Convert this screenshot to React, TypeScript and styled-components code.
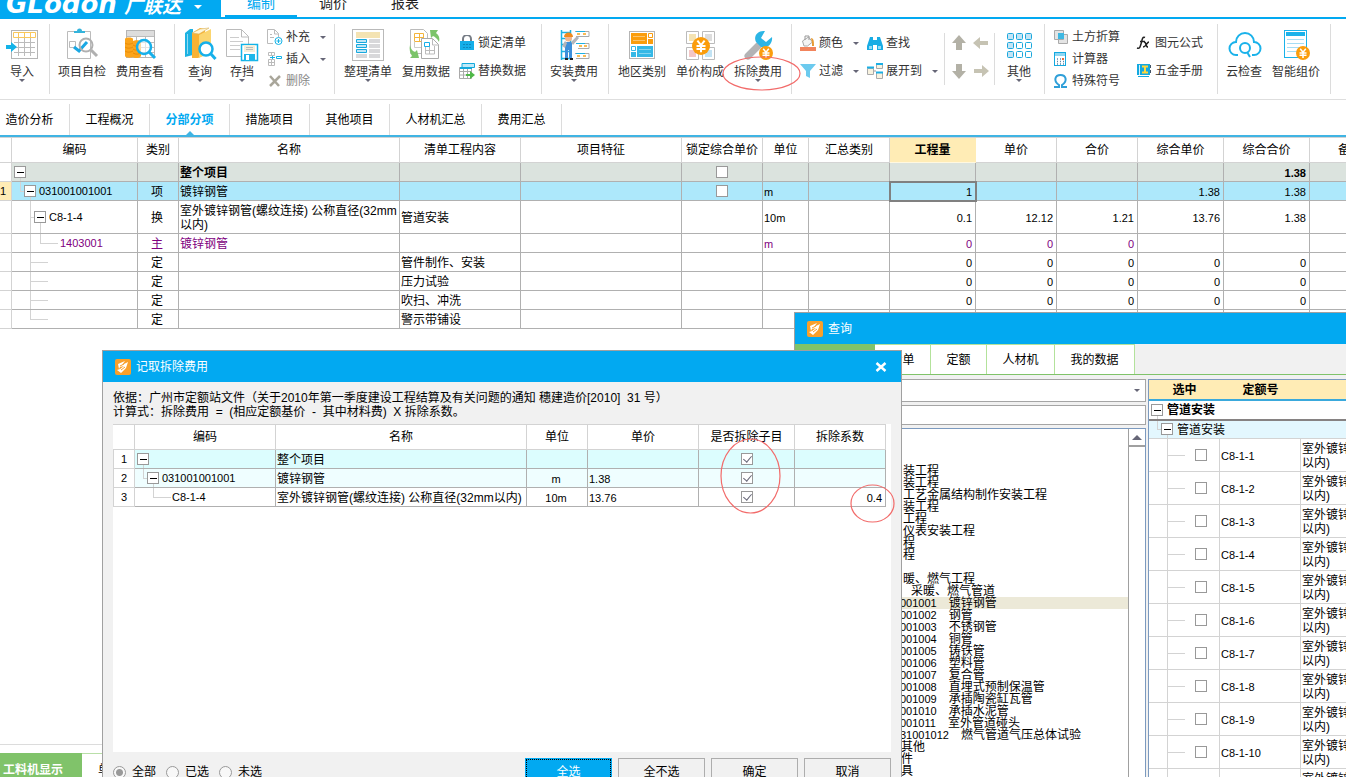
import React from "react";
import styled, { createGlobalStyle, css } from "styled-components";

const blue = "#02a9f1";
const green = "#80c36a";
const grid = "#b0b0b0";
const lightGrid = "#d3d3d3";
const sand = "#ffecb5";

const Global = createGlobalStyle`
  * { box-sizing: border-box; }
  html, body { margin: 0; padding: 0; height: 100%; overflow: hidden; background: #fff; }
  body, button, input, select, table {
    font-family: "Liberation Sans", "Noto Sans CJK SC", sans-serif;
    font-size: 12px;
    line-height: 14px;
    color: #000;
  }
  button { border: 0; padding: 0; background: none; white-space: nowrap; }
  svg { display: block; flex: none; }
`;

const Page = styled.div`
  position: relative;
  display: flex;
  flex-direction: column;
  height: 100vh;
  min-height: 500px;
  overflow: hidden;
`;

/* ---------- header ---------- */

const Header = styled.header`
  display: flex;
  flex: none;
  align-items: flex-end;
  height: 19px;
  overflow: hidden;
  border-bottom: 2px solid ${blue};
`;

const Brand = styled.div`
  display: flex;
  align-items: flex-end;
  width: 221px;
  margin-right: 4px;
  padding-left: 6px;
  background: ${blue};
  color: #fff;
  white-space: nowrap;
`;

const BrandLatin = styled.span`
  width: 118px;
  font: italic bold 26px/26px "DejaVu Sans", sans-serif;
`;

const BrandHan = styled.span`
  font-size: 19px;
  font-weight: bold;
  font-style: italic;
  line-height: 20px;
`;

const MenuTab = styled.button<{ $active?: boolean }>`
  width: 72px;
  height: 27px;
  border-bottom: 2px solid ${(p) => (p.$active ? blue : "transparent")};
  color: ${(p) => (p.$active ? blue : "#222")};
  font-size: 14px;
`;

const Caret = styled.i<{ $light?: boolean }>`
  flex: none;
  width: 0;
  height: 0;
  border: 3px solid transparent;
  border-bottom: 0;
  border-top-color: ${(p) => (p.$light ? "#fff" : "#667")};
`;

const BrandCaret = styled(Caret)`
  margin: 0 0 8px 13px;
  border-width: 4px;
  border-bottom: 0;
`;

/* ---------- ribbon ---------- */

const Ribbon = styled.nav`
  display: flex;
  flex: none;
  height: 81px;
  padding-top: 5px;
  border-bottom: 1px solid #dedede;
`;

const Group = styled.div<{ $w: number; $pad?: number; $short?: boolean }>`
  position: relative;
  display: flex;
  flex: none;
  width: ${(p) => p.$w}px;
  height: 70px;
  padding-left: ${(p) => p.$pad || 0}px;
  &::after {
    content: "";
    position: absolute;
    right: 0;
    top: ${(p) => (p.$short ? 9 : 0)}px;
    bottom: ${(p) => (p.$short ? 9 : 0)}px;
    border-right: 1px solid #dcdcdc;
  }
`;

const BigButton = styled.button<{ $w: number }>`
  position: relative;
  display: flex;
  flex: none;
  flex-direction: column;
  align-items: center;
  width: ${(p) => p.$w}px;
  height: 60px;
  padding-top: 3px;
  color: #333;
  line-height: 18px;
`;

const BigCaret = styled(Caret)`
  position: absolute;
  bottom: 2px;
`;

const Stack = styled.div<{ $w: number; $row: number; $pad?: number }>`
  display: flex;
  flex: none;
  flex-direction: column;
  width: ${(p) => p.$w}px;
  padding-top: ${(p) => (p.$row === 22 ? 2 : 5)}px;
  padding-left: ${(p) => p.$pad || 0}px;
`;

const SmallButton = styled.button<{ $row: number; $muted?: boolean }>`
  display: flex;
  align-items: center;
  gap: 3px;
  height: ${(p) => p.$row}px;
  color: ${(p) => (p.$muted ? "#888" : "#333")};
`;

const SmallCaret = styled(Caret)`
  margin-left: 7px;
`;

/* ---------- view tabs ---------- */

const ViewTabs = styled.div`
  display: flex;
  flex: none;
  height: 37px;
  padding-top: 4px;
  border-bottom: 2px solid #40b4e3;
`;

const ViewTab = styled.button<{ $w: number; $active?: boolean }>`
  position: relative;
  flex: none;
  width: ${(p) => p.$w}px;
  border-right: 1px solid #dcdcdc;
  ${(p) =>
    p.$active &&
    css`
      color: ${blue};
      font-weight: bold;
      &::after {
        content: "";
        position: absolute;
        left: 50%;
        bottom: 0;
        margin-left: -4px;
        border: 4px solid transparent;
        border-top: 0;
        border-bottom-color: #40b4e3;
      }
    `}
  &:first-child { margin-left: -10px; }
`;

/* ---------- tables ---------- */

const Workspace = styled.main`
  flex: 1;
  min-height: 0;
  overflow: hidden;
`;

const Sheet = styled.table`
  width: 100%;
  border-spacing: 0;
  border-collapse: separate;
  border-top: 1px solid ${lightGrid};
  table-layout: fixed;
  background: #fff;
`;

const MainSheet = styled(Sheet)`
  min-width: 1391px;
`;

const Th = styled.th<{ $hot?: boolean }>`
  height: 25px;
  padding: 0;
  border-right: 1px solid ${(p) => (p.$hot ? sand : lightGrid)};
  border-bottom: 1px solid ${(p) => (p.$hot ? "#fff8e0" : lightGrid)};
  background: ${(p) => (p.$hot ? sand : "#fff")};
  font-weight: ${(p) => (p.$hot ? "bold" : "normal")};
  white-space: nowrap;
`;

type Align = "left" | "center" | "right";

const Td = styled.td<{ $align?: Align; $focus?: boolean; $mark?: boolean; $gutter?: boolean; $flush?: boolean }>`
  padding: ${(p) => (p.$flush || p.$gutter ? "0" : "2px 3px 0 1px")};
  border-right: 1px solid ${(p) => (p.$gutter ? lightGrid : grid)};
  border-bottom: 1px solid ${(p) => (p.$gutter ? lightGrid : grid)};
  text-align: ${(p) => p.$align || "left"};
  white-space: nowrap;
  overflow: hidden;
  ${(p) => p.$gutter && css`background: ${p.$mark ? sand : "#fff"};`}
  ${(p) => p.$focus && css`outline: 2px solid #808080; outline-offset: -1px;`}
`;

const Tr = styled.tr<{ $h?: number; $bg?: string; $color?: string; $bold?: boolean }>`
  height: ${(p) => p.$h || 19}px;
  background: ${(p) => p.$bg || "#fff"};
  td { color: ${(p) => p.$color || "#000"}; font-weight: ${(p) => (p.$bold ? "bold" : "normal")}; }
`;

const TreeCell = styled.div`
  display: flex;
  align-items: center;
`;

const Code = styled.span`
  font-size: 11px;
`;

const Tick = styled.input.attrs({ type: "checkbox" })`
  appearance: none;
  display: block;
  position: relative;
  width: 12px;
  height: 12px;
  margin: 0 auto;
  border: 1px solid #999;
  background: #fff;
  &:checked::after {
    content: "";
    position: absolute;
    left: 3px;
    top: 0;
    width: 4px;
    height: 7px;
    border: solid #667;
    border-width: 0 1px 1px 0;
    transform: rotate(40deg);
  }
`;

/* ---------- bottom panel ---------- */

const BottomPanel = styled.footer`
  display: flex;
  flex: none;
  height: 33px;
  padding-top: 8px;
  border-top: 1px solid #dcdcdc;
  overflow: hidden;
`;

const BottomTab = styled.button<{ $active?: boolean }>`
  width: ${(p) => (p.$active ? 82 : 80)}px;
  height: 32px;
  padding-left: ${(p) => (p.$active ? 3 : 16)}px;
  border-top: 1px solid ${(p) => (p.$active ? green : "#b9dfa8")};
  background: ${(p) => (p.$active ? green : "#fff")};
  color: ${(p) => (p.$active ? "#fff" : "#000")};
  font-weight: ${(p) => (p.$active ? "bold" : "normal")};
  text-align: left;
`;

/* ---------- floating windows ---------- */

const Frame = styled.section`
  position: absolute;
  border: 1px solid #a0a0a0;
  background: #f1f1f1;
`;

const QueryFrame = styled(Frame)`
  display: flex;
  flex-direction: column;
  left: 794px;
  right: 0;
  top: 312px;
  bottom: -12px;
  border-right: 0;
`;

const DialogFrame = styled(Frame)`
  left: 102px;
  top: 350px;
  width: 800px;
`;

const TitleBar = styled.div`
  display: flex;
  flex: none;
  align-items: center;
  gap: 5px;
  height: 31px;
  padding: 0 14px 0 12px;
  background: ${blue};
  color: #fff;
`;

const CloseButton = styled.button`
  margin-left: auto;
`;

const QueryTabs = styled.div`
  display: flex;
  flex: none;
  height: 31px;
  border-bottom: 1px solid ${green};
`;

const QueryTab = styled.button<{ $w: number; $active?: boolean }>`
  width: ${(p) => p.$w}px;
  border-top: 1px solid #b3e29b;
  border-right: 1px solid #b3e29b;
  background: ${(p) => (p.$active ? green : "#fff")};
  ${(p) => p.$active && css`border-color: ${green};`}
`;

const QueryBody = styled.div`
  display: flex;
  flex: 1;
  min-height: 0;
  padding: 4px 0 0 4px;
  gap: 2px;
`;

const QueryLeft = styled.div`
  display: flex;
  flex: none;
  flex-direction: column;
  gap: 3px;
  width: 347px;
`;

const Field = css`
  width: 100%;
  margin: 0;
  border: 1px solid #a5a5a5;
  border-radius: 0;
  background: #fff;
  outline: 0;
`;

const SelectWrap = styled.div`
  position: relative;
  height: 23px;
`;

const Select = styled.select`
  ${Field}
  appearance: none;
  height: 23px;
`;

const SelectCaret = styled(Caret)`
  position: absolute;
  right: 6px;
  top: 10px;
`;

const TextBox = styled.input`
  ${Field}
  height: 20px;
`;

const ListBox = styled.div`
  display: flex;
  flex: 1;
  min-height: 0;
  overflow: hidden;
  border: 1px solid #7c9abf;
  background: #fff;
`;

const Items = styled.ul`
  flex: 1;
  margin: 0;
  padding: 36px 0 0;
  list-style: none;
`;

const Item = styled.li<{ $indent: number; $hot?: boolean }>`
  display: flex;
  gap: 12px;
  height: 12px;
  padding-left: ${(p) => p.$indent}px;
  line-height: 12px;
  white-space: nowrap;
  background: ${(p) => (p.$hot ? "#ece9d8" : "transparent")};
`;

const ScrollTrack = styled.div`
  width: 17px;
  border-left: 1px solid #a0a0a0;
`;

const ScrollUp = styled.button`
  display: flex;
  align-items: center;
  justify-content: center;
  width: 16px;
  height: 18px;
  border-bottom: 2px solid #a0a0a0;
  &::before {
    content: "";
    border: 5px solid transparent;
    border-top: 0;
    border-bottom-color: #667;
  }
`;

const QueryRight = styled.div`
  flex: 1;
  min-width: 0;
  overflow: hidden;
  border-left: 1px solid #7c9abf;
  border-top: 1px solid #7c9abf;
  background: #fff;
`;

const QuotaSheet = styled.table`
  width: 100%;
  min-width: 373px;
  border-spacing: 0;
  table-layout: fixed;
`;

const QuotaTh = styled.th`
  height: 21px;
  padding: 0;
  border-bottom: 2px solid #3aa9dc;
  background: ${sand};
`;

const QuotaTd = styled.td<{ $level?: number }>`
  height: 33px;
  padding: 2px 0 0 1px;
  border-right: 1px solid ${lightGrid};
  border-bottom: 1px solid ${lightGrid};
  white-space: nowrap;
  ${(p) => p.$level === 0 && css`padding: 0;`}
  ${(p) => p.$level === 1 && css`height: 20px; padding: 0 0 0 2px; border-bottom: 2px solid #868282; font-weight: bold;`}
  ${(p) => p.$level === 2 && css`height: 18px; padding: 0 0 0 2px; background: #e3f7fe;`}
`;

const TickCell = styled.div`
  display: flex;
  align-items: center;
  gap: 10px;
  &::before {
    content: "";
    width: 17px;
    border-top: 1px solid ${lightGrid};
  }
  input { margin: 0; }
`;

const DialogBody = styled.div`
  padding: 9px 10px 8px;
`;

const Note = styled.p`
  margin: 0 0 5px;
  white-space: pre;
`;

const WhitePanel = styled.div`
  height: 328px;
  padding-right: 5px;
  background: #fff;
`;

const DialogSheet = styled(Sheet)`
  td:first-child { border-left: 1px solid ${lightGrid}; }
`;

const DialogFooter = styled.div`
  display: flex;
  align-items: center;
  gap: 6px;
  margin-top: 6px;
`;

const Radios = styled.div`
  display: flex;
  flex: 1;
  gap: 10px;
`;

const RadioLabel = styled.label`
  display: flex;
  align-items: center;
  gap: 6px;
`;

const Radio = styled.input.attrs({ type: "radio" })`
  appearance: none;
  width: 13px;
  height: 13px;
  margin: 0;
  border: 1px solid #999;
  border-radius: 50%;
  background: #f8f8f8;
  &:checked { background: radial-gradient(circle, #999 0 3px, #f8f8f8 4px); }
`;

const DialogButton = styled.button<{ $primary?: boolean }>`
  width: 87px;
  height: 28px;
  border: 1px solid #adadad;
  ${(p) =>
    p.$primary &&
    css`
      border-color: ${blue};
      background: ${blue};
      color: #fff;
      outline: 1px dotted #000;
      outline-offset: -2px;
    `}
`;

const Ring = styled.svg<{ $x: number; $y: number }>`
  position: absolute;
  left: ${(p) => p.$x}px;
  top: ${(p) => p.$y}px;
  pointer-events: none;
  z-index: 1;
`;

const Annotation = ({ x, y, w, h }: { x: number; y: number; w: number; h: number }) => (
  <Ring $x={x} $y={y} width={w} height={h} aria-hidden="true">
    <ellipse cx={w / 2} cy={h / 2} rx={w / 2 - 1} ry={h / 2 - 1} fill="none" stroke="#f26b6a" strokeWidth="1.2" />
  </Ring>
);

/* ---------- icons ---------- */

const Big = ({ children }: { children: React.ReactNode }) => (
  <svg width="36" height="36" viewBox="0 0 36 36" fill="none" aria-hidden="true">{children}</svg>
);

const Small = ({ children }: { children: React.ReactNode }) => (
  <svg width="16" height="16" viewBox="0 0 16 16" fill="none" aria-hidden="true">{children}</svg>
);

const Coin = ({ x, y, r }: { x: number; y: number; r: number }) => (
  <g>
    <circle cx={x} cy={y} r={r} fill="#fb9d0c" />
    <path
      d={`M${x - r * 0.4} ${y - r * 0.6}L${x} ${y - r * 0.1}L${x + r * 0.4} ${y - r * 0.6}M${x - r * 0.5} ${y}h${r}M${x - r * 0.5} ${y + r * 0.32}h${r}M${x} ${y - r * 0.1}v${r * 0.8}`}
      stroke="#fff"
      strokeWidth={r > 8 ? 2 : 1.5}
    />
  </g>
);

const icons: Record<string, React.ReactNode> = {
  import: (
    <Big>
      <rect x="7.5" y="3.5" width="26" height="28" stroke="#b5b5b5" />
      <path d="M10 10.500h21M10 15.500h21M10 20.500h21M10 25.500h21M14.500 10v19M20.500 10v19M26.500 10v19" stroke="#bbb" />
      <path d="M9.500 5.500h22v5h-22zM14.500 5v5M20.500 5v5M26.500 5v5" stroke="#f9c75c" />
      <path d="M2 18h5v-3l6 5-6 5v-3H2z" fill="#13b3e8" />
    </Big>
  ),
  check: (
    <Big>
      <path d="M3.500 4.500h23v27h-23z" stroke="#bbb" />
      <path d="M10 6V4h3a2 2 0 0 1 5 0h3v2z" fill="#35b4dc" />
      <path d="M5.500 14.500h6v6h-6z" stroke="#bbb" />
      <path d="M10 20l5 4 8-9" stroke="#1aa8e4" strokeWidth="3" />
      <circle cx="22" cy="18" r="6.500" stroke="#b0b0b0" strokeWidth="2" />
      <path d="M27 23l6 6" stroke="#b0b0b0" strokeWidth="3" />
    </Big>
  ),
  feeview: (
    <Big>
      <rect x="4.500" y="3.500" width="28" height="27" fill="#fff" stroke="#b5b5b5" />
      <path d="M5 4h27v5H5z" fill="#ddd" />
      <path d="M5 9.500h27M5 15.500h27M5 20.500h27M5 25.500h27M14.500 9v21M23.500 9v21" stroke="#bbb" />
      <path d="M3 12c0-2 8-2 8 0v2c2-1 8-1 8 1v14c0 2-7 3-8 1-1 1-8 1-8-1z" fill="#fba41c" />
      <path d="M3 16c3 2 6 1 8 0M3 20c3 2 6 1 8 0M3 24c3 2 6 1 8 0M11 18c3 2 6 1 8 0M11 22c3 2 6 1 8 0M11 26c3 2 6 1 8 0" stroke="#e88b06" />
      <circle cx="22" cy="20" r="7" fill="#fff" fillOpacity=".6" stroke="#16b0ea" strokeWidth="2.500" />
      <path d="M27 25l6 6" stroke="#16b0ea" strokeWidth="3" />
    </Big>
  ),
  query: (
    <Big>
      <path d="M3 6l5-4h3v26l-8 2z" fill="#1db2e2" />
      <path d="M5.500 7v20" stroke="#8fdaf3" />
      <path d="M10 6l8-5 5 1v26l-7 3h-6z" fill="#f9b233" />
      <path d="M17 8l12-6v23l-12 6z" fill="#fbd56f" />
      <path d="M10 6l8-4 9-1-10 6z" fill="#fff6d8" stroke="#d9b460" strokeWidth=".6" />
      <circle cx="24" cy="22" r="6.500" fill="#fff" stroke="#16b0ea" strokeWidth="2.500" />
      <path d="M28.500 26.500l5 5.500" stroke="#16b0ea" strokeWidth="3" />
    </Big>
  ),
  archive: (
    <Big>
      <path d="M18 29.500H2.500v-27h15l7 7V17M17.500 3v7h7" stroke="#bbb" />
      <path d="M6 10.500h9M6 14.500h13M6 18.500h10M6 22.500h10" stroke="#ccc" />
      <rect x="17.500" y="17.500" width="16" height="16" fill="#fff" stroke="#13b3e8" strokeWidth="1.500" />
      <path d="M20 18h11v7H20z" fill="#f4eed9" />
      <path d="M22 20.500h7M22 22.500h7" stroke="#bbb" />
      <path d="M20 27h11v7H20z" fill="#1cb7ea" />
      <path d="M22 28h3v5h-3z" fill="#fff" />
    </Big>
  ),
  tidy: (
    <Big>
      <rect x="2.500" y="2.500" width="31" height="31" stroke="#b9b9b9" />
      <path d="M6 5h24v6H6z" fill="#f4e3b3" />
      <path d="M6 27h11v4H6zM19 12h11v4H19zM19 17h11v4H19zM19 22h11v4H19zM19 27h11v4H19z" fill="#d8d8da" />
      <path d="M6.500 12.500h10v3h-10zM6.500 17.500h10v3h-10zM6.500 22.500h10v3h-10z" fill="#bfe6f6" stroke="#18a9de" />
    </Big>
  ),
  reuse: (
    <Big>
      <path d="M2.500 2.500h13l4 4v20h-17z" fill="#fff" stroke="#bbb" />
      <path d="M6.500 6.500h9v8h-9zM6 10.500h10M11.500 6v9" stroke="#f5b53c" />
      <path d="M6.500 14.500v6h9" stroke="#ccc" />
      <path d="M13.500 11.500h11l6 6v14h-17z" fill="#fff" stroke="#aaa" />
      <path d="M24.500 12v6h6M17.500 19v8h9v-8M17 23.500h10M21.500 18v9" stroke="#bbb" />
      <path d="M16.500 15.500h5v4h-5z" stroke="#16b0ea" />
      <path d="M22 3h8l-2 3c3 2 4 5 3 9-2-4-4-5-6-6l-2 2zM2 18c1 5 3 6 5 7l2-2 2 8H2l2-2c-2-3-3-7-2-11z" fill="#7cc46a" />
    </Big>
  ),
  install: (
    <Big>
      <path d="M5.500 3v30M14.500 3v30M5 5.500h10M5 11.500h10M5 17.500h10M5 24.500h10M5 31.500h10" stroke="#1db2e2" strokeWidth="1.500" />
      <path d="M19 4.500h14v5H20M22 16.500h11v5H22M19 26.500h14v5H20" stroke="#aaa" />
      <path d="M20 4.500h9M20 16.500h9M20 26.500h9" stroke="#1db2e2" />
      <path d="M21 7h3M27 7h3M23 19h3M28 19h3M21 29h3M27 29h3" stroke="#f7a51d" strokeWidth="1.500" />
      <circle cx="12.500" cy="11" r="3.500" fill="#f0b58e" />
      <path d="M8 10c0-6 9-6 9 0z" fill="#f08a1d" />
      <path d="M9 15h7v16h-3v-8h-1v8H9z" fill="#3e8fda" />
      <path d="M6 19l3-5 2 2-2 5zM15 15l6-6 2 2-6 7z" fill="#b3b6bb" />
      <path d="M9 31h3v2H9zM14 31h3v2h-3z" fill="#222" />
    </Big>
  ),
  region: (
    <Big>
      <rect x="5.500" y="4.500" width="25" height="27" fill="#fff" stroke="#b5b5b5" />
      <path d="M7 6h16v11H7zM24 12h5v5h-5z" fill="#fb9d0c" />
      <path d="M24.500 6.500h4v4h-4z" stroke="#fb9d0c" />
      <path d="M9 9.500h12M9 13.500h12" stroke="#fcc56d" />
      <path d="M13 19h16v11H13zM7 25h5v5H7z" fill="#35b8e6" />
      <path d="M7.500 19.500h4v4h-4z" stroke="#35b8e6" />
      <path d="M15 22.500h12M15 26.500h12" stroke="#83d6f2" />
    </Big>
  ),
  price: (
    <Big>
      <path d="M4.500 4.500h12v12h-12zM20.500 4.500h12v12h-12zM4.500 20.500h12v12h-12zM20.500 20.500h12v12h-12z" stroke="#bbb" />
      <path d="M7 7h7v7H7z" fill="#f4e3b3" />
      <path d="M23 7h7v7h-7z" fill="#ddd" />
      <path d="M7 23h7v7H7z" fill="#f3c6c6" />
      <path d="M23 23h7v7h-7z" fill="#c2e3f4" />
      <Coin x={19} y={19} r={9} />
    </Big>
  ),
  wrench: (
    <Big>
      <path d="M8 29l10-10" stroke="#b3b3b5" strokeWidth="7" strokeLinecap="round" />
      <path d="M25 4c-7-1-12 5-9 11l5 5c6 2 12-3 11-10l-6 5-5-4z" fill="#2cb5e5" />
      <Coin x={26} y={26} r={7} />
    </Big>
  ),
  more: (
    <Big>
      {[0, 1, 2].map((r) =>
        [0, 1, 2].map((c) => (
          <rect key={`${r}${c}`} x={6.5 + c * 9} y={6.5 + r * 9} width="6" height="6" rx="1" fill={r === 0 || c === 0 ? "#c4e4f5" : "#fff"} stroke="#1aa8dd" />
        ))
      )}
    </Big>
  ),
  cloud: (
    <Big>
      <path d="M12 28H10a6.500 6.500 0 0 1 0-13 9 9 0 0 1 18 0 6.500 6.500 0 0 1 0 13h-2" stroke="#1ab2ea" strokeWidth="2" />
      <circle cx="19" cy="21" r="5" stroke="#1ab2ea" strokeWidth="2" />
      <path d="M21 25l3 5" stroke="#1ab2ea" strokeWidth="2" />
    </Big>
  ),
  smart: (
    <Big>
      <rect x="6.500" y="3.500" width="22" height="27" stroke="#1ab2ea" />
      <path d="M8 5h19v4H8z" fill="#1ab2ea" />
      <path d="M9 12.500h17M9 16.500h17M9 20.500h13M9 24.500h10" stroke="#a6ddf4" />
      <Coin x={25} y={26} r={7} />
    </Big>
  ),
  add: (
    <Small>
      <path d="M6 14.500H.5V.500h7l4 4V8M7.500 1v4h4M3 5.500h2M3 8.500h4" stroke="#bbb" />
      <circle cx="11.500" cy="12" r="3.500" fill="#fff" stroke="#13b3e8" />
      <path d="M9.500 12h4M11.500 10v4" stroke="#13b3e8" />
    </Small>
  ),
  insert: (
    <Small>
      <path d="M1.500 1.500h6v3h-6zM4.500 1v4M1.500 8.500h6v6h-6zM4.500 8v7M1 11.500h7" stroke="#bbb" />
      <path d="M3 6.500h5M5.500 5v3" stroke="#13b3e8" />
      <path d="M9.500 5.500h5v2h-5z" stroke="#13b3e8" />
    </Small>
  ),
  remove: (
    <Small>
      <path d="M3 3l9 10M13 3L3 13" stroke="#a9a69a" strokeWidth="2.500" />
    </Small>
  ),
  lock: (
    <Small>
      <path d="M4 7V4a4 4 0 0 1 8 0v3" stroke="#777d86" strokeWidth="2" />
      <path d="M1 6h14v9H1z" fill="#14aee8" />
      <path d="M4 9.500h2M7 9.500h2M10 9.500h2M4 12.500h2M7 12.500h2M10 12.500h2" stroke="#0c88bd" />
    </Small>
  ),
  replace: (
    <Small>
      <path d="M3 .500h12.500v4H3z" fill="#bfe9f8" stroke="#13a9dc" />
      <path d="M.500 4.500h12v11H.500zM.500 8.500h12M.500 12h12M4.500 5v10M8.500 5v10" stroke="#aaa" />
      <path d="M1 4h12v2H1z" fill="#13a9dc" />
      <path d="M7 11h4V8l5 4-5 4v-3H7z" fill="#4fb947" />
    </Small>
  ),
  color: (
    <Small>
      <path d="M0 12h16v4H0z" fill="#f2845c" />
      <path d="M2.500 6l6-4 4 5-5 4H4z" fill="#f4f4f4" stroke="#aaa" />
      <path d="M5 5V1h4v4" stroke="#999" />
      <path d="M11 3c3 0 3 4 3 8h-2V8z" fill="#e79a33" />
    </Small>
  ),
  filter: (
    <Small>
      <path d="M0 1h16l-6 7v7l-4-2V8z" fill="#6ccaee" />
    </Small>
  ),
  find: (
    <Small>
      <path d="M3 2h3v3h4V2h3l3 9v4h-6v-5H6v5H0v-4z" fill="#18ace4" />
      <path d="M2 11h3v3H2zM11 11h3v3h-3z" fill="#95dbf5" />
    </Small>
  ),
  expand: (
    <Small>
      <path d="M.5 5.500h6v6h-6zM9.500.500h6v5h-6zM9.500 9.500h6v6h-6z" fill="#f8f2df" stroke="#aaa" />
      <path d="M0 4.500h7M9 1h7M9 9.500h7" stroke="#1bafe5" strokeWidth="2" />
      <path d="M7 8h2" stroke="#999" />
    </Small>
  ),
  up: (
    <Small>
      <path d="M8 0l7 8h-4v7H5V8H1z" fill="#b3b1a6" />
    </Small>
  ),
  down: (
    <Small>
      <path d="M8 16l7-8h-4V1H5v7H1z" fill="#b3b1a6" />
    </Small>
  ),
  left: (
    <Small>
      <path d="M0 8l7-6v4h8v4H7v4z" fill="#c6c3b3" />
    </Small>
  ),
  right: (
    <Small>
      <path d="M16 8L9 2v4H1v4h8v4z" fill="#c6c3b3" />
    </Small>
  ),
  earth: (
    <Small>
      <path d="M1.500 1.500h9v9h-9zM5.500 5.500h9v9h-9z" fill="#e4e4e4" stroke="#aaa" />
      <path d="M5 4h6v6H5z" fill="#3fb8e2" />
    </Small>
  ),
  calc: (
    <Small>
      <rect x="1.500" y="1.500" width="11" height="13" fill="#fff" stroke="#13a9e0" />
      <path d="M2 2h10v3H2z" fill="#8fd6f2" />
      <path d="M4 8h1M7 8h1M4 10.500h1M7 10.500h1M10 10.500h1M4 13h1M7 13h1M10 13h1" stroke="#5b86a8" strokeWidth="1.500" />
      <path d="M9 7h2v2H9z" fill="#e66b3f" />
    </Small>
  ),
  omega: (
    <Small>
      <path d="M1 14h5v-2C0 8 2 2 7.500 2S15 8 9 12v2h5" stroke="#2f9fd8" strokeWidth="2" />
    </Small>
  ),
  fx: (
    <Small>
      <path d="M9 2.500C6 1 6 6 5 9s-1 5-4 4M4 6.500h5" stroke="#222" strokeWidth="1.500" />
      <path d="M8 7c3 0 1 5 4 5M13 7c-2 0-3 5-6 5" stroke="#222" strokeWidth="1.500" />
    </Small>
  ),
  handbook: (
    <Small>
      <path d="M1 1h13v11H1zM2 13h11v1H2z" fill="#13a9e0" />
      <path d="M3.500 2v10" stroke="#d8f1fb" />
      <path d="M6 3.500h6M9 4v6M6 9.500h6" stroke="#ffd83d" strokeWidth="2" />
      <path d="M14.500 2v3M14.500 7v3" stroke="#456" />
    </Small>
  ),
};

const AppMark = () => (
  <svg width="16" height="16" viewBox="0 0 16 16" aria-hidden="true">
    <rect width="16" height="16" rx="2" fill="#f9a02b" />
    <path d="M3 5l7-3-3 4 6-3-2 6-5 5-4-3 3-1 4-3-4 1-1 2z" fill="#fff" />
    <path d="M5 7l4-2M6 11l4-3" stroke="#f9a02b" />
  </svg>
);

/* ---------- tree guides ---------- */

interface GuideProps {
  w: number;
  h: number;
  box?: number;
  verticals?: [number, number, number][];
  arm?: [number, number];
}

const TreeGuide = ({ w, h, box, verticals = [], arm }: GuideProps) => {
  const mid = Math.floor(h / 2);
  return (
    <svg width={w} height={h} fill="none" aria-hidden="true">
      {verticals.map(([x, y1, y2]) => (
        <path key={x} d={`M${x + 0.5} ${y1}V${y2}`} stroke={lightGrid} />
      ))}
      {arm && <path d={`M${arm[0]} ${mid + 0.5}H${arm[1]}`} stroke={lightGrid} />}
      {box !== undefined && (
        <>
          <rect x={box + 0.5} y={mid - 5.5} width="11" height="11" fill="#fff" stroke="#999" />
          <path d={`M${box + 3} ${mid + 0.5}h7`} stroke="#000" />
        </>
      )}
    </svg>
  );
};

/* ---------- data ---------- */

const columns: [string, number?][] = [
  ["", 12], ["编码", 126], ["类别", 41], ["名称", 221], ["清单工程内容", 121], ["项目特征", 161], ["锁定综合单价", 81],
  ["单位", 46], ["汇总类别", 81], ["工程量", 86], ["单价", 81], ["合价", 81], ["综合单价", 86], ["综合合价", 86], ["备注"],
];

interface Row {
  guide: GuideProps;
  code?: string;
  kind?: string;
  name?: React.ReactNode;
  work?: string;
  lock?: boolean;
  unit?: string;
  nums: string[];
  h?: number;
  bg?: string;
  color?: string;
  bold?: boolean;
  current?: boolean;
}

const pipe = (
  <>
    室外镀锌钢管(螺纹连接) 公称直径(32mm
    <br />
    以内)
  </>
);

const zeros = ["0", "0", "0", "0", "0"];
const leaf = (last = false): GuideProps => ({ w: 38, h: 18, verticals: [[18, 0, last ? 9 : 18]], arm: [18, 36] });

const rows: Row[] = [
  { guide: { w: 26, h: 18, box: 2, verticals: [[8, 14, 18]] }, name: "整个项目", lock: true, nums: ["", "", "", "", "1.38"], bg: "#dbe3de", bold: true },
  { guide: { w: 27, h: 18, box: 12, verticals: [[8, 0, 9], [18, 14, 18]], arm: [8, 12] }, code: "031001001001", kind: "项", name: "镀锌钢管", lock: true, unit: "m", nums: ["1", "", "", "1.38", "1.38"], bg: "#ade8fb", current: true },
  { guide: { w: 37, h: 32, box: 22, verticals: [[18, 0, 32], [28, 21, 32]], arm: [18, 22] }, code: "C8-1-4", kind: "换", name: pipe, work: "管道安装", unit: "10m", nums: ["0.1", "12.12", "1.21", "13.76", "1.38"], h: 33 },
  { guide: { w: 48, h: 18, verticals: [[18, 0, 18], [28, 0, 9]], arm: [28, 46] }, code: "1403001", kind: "主", name: "镀锌钢管", unit: "m", nums: ["0", "0", "0", "", ""], color: "#800080" },
  { guide: leaf(), kind: "定", work: "管件制作、安装", nums: zeros },
  { guide: leaf(), kind: "定", work: "压力试验", nums: zeros },
  { guide: leaf(), kind: "定", work: "吹扫、冲洗", nums: zeros },
  { guide: leaf(true), kind: "定", work: "警示带铺设", nums: ["", "", "", "", ""] },
];

const listItems: { code?: string; name: string; indent: number; hot?: boolean }[] = [
  { name: "装工程", indent: 103 }, { name: "装工程", indent: 103 }, { name: "工艺金属结构制作安装工程", indent: 103 },
  { name: "装工程", indent: 103 }, { name: "工程", indent: 103 }, { name: "仪表安装工程", indent: 103 },
  { name: "程", indent: 103 }, { name: "程", indent: 103 }, { name: "", indent: 103 },
  { name: "暖、燃气工程", indent: 103 }, { name: "采暖、燃气管道", indent: 111 },
  { code: "001001", name: "镀锌钢管", indent: 100, hot: true }, { code: "001002", name: "钢管", indent: 100 },
  { code: "001003", name: "不锈钢管", indent: 100 }, { code: "001004", name: "铜管", indent: 100 },
  { code: "001005", name: "铸铁管", indent: 100 }, { code: "001006", name: "塑料管", indent: 100 },
  { code: "001007", name: "复合管", indent: 100 }, { code: "001008", name: "直埋式预制保温管", indent: 100 },
  { code: "001009", name: "承插陶瓷缸瓦管", indent: 100 }, { code: "001010", name: "承插水泥管", indent: 100 },
  { code: "001011", name: "室外管道碰头", indent: 100 }, { code: "31001012", name: "燃气管道气压总体试验", indent: 100 },
  { name: "其他", indent: 101 }, { name: "件", indent: 101 }, { name: "具", indent: 101 },
];

/* ---------- pieces ---------- */

const Tool = ({ icon, label, w = 58, menu, children }: { icon: string; label: string; w?: number; menu?: boolean; children?: React.ReactNode }) => (
  <BigButton $w={w}>
    {icons[icon]}
    <span>{label}</span>
    {menu && <BigCaret />}
    {children}
  </BigButton>
);

const MiniTool = ({ icon, label, row, menu, muted }: { icon: string; label?: string; row: number; menu?: boolean; muted?: boolean }) => (
  <SmallButton $row={row} $muted={muted} aria-label={label || icon}>
    {icons[icon]}
    {label && <span>{label}</span>}
    {menu && <SmallCaret />}
  </SmallButton>
);

const MainTable = () => (
  <MainSheet>
    <colgroup>
      {columns.map(([name, w]) => <col key={name} width={w} />)}
    </colgroup>
    <thead>
      <tr>{columns.map(([name]) => <Th key={name} $hot={name === "工程量"}>{name}</Th>)}</tr>
    </thead>
    <tbody>
      {rows.map((r, i) => (
        <Tr key={i} $h={r.h} $bg={r.bg} $color={r.color} $bold={r.bold}>
          <Td $gutter $mark={r.current} $align="left">{r.current && <Code>1</Code>}</Td>
          <Td $flush>
            <TreeCell><TreeGuide {...r.guide} /><Code>{r.code}</Code></TreeCell>
          </Td>
          <Td $align="center">{r.kind}</Td>
          <Td>{r.name}</Td>
          <Td>{r.work}</Td>
          <Td />
          <Td $flush>{r.lock && <Tick aria-label="锁定综合单价" />}</Td>
          <Td><Code>{r.unit}</Code></Td>
          <Td />
          {r.nums.map((n, k) => (
            <Td key={k} $align="right" $focus={r.current && k === 0}><Code>{n}</Code></Td>
          ))}
          <Td />
        </Tr>
      ))}
    </tbody>
  </MainSheet>
);

const QueryWindow = () => (
  <QueryFrame>
    <TitleBar><AppMark />查询</TitleBar>
    <QueryTabs>
      <QueryTab $w={80} $active aria-label="指引" />
      <QueryTab $w={56}>清单</QueryTab>
      <QueryTab $w={56}>定额</QueryTab>
      <QueryTab $w={68}>人材机</QueryTab>
      <QueryTab $w={80}>我的数据</QueryTab>
    </QueryTabs>
    <QueryBody>
      <QueryLeft>
        <SelectWrap>
          <Select aria-label="定额库"><option /></Select>
          <SelectCaret />
        </SelectWrap>
        <TextBox aria-label="查询" />
        <ListBox>
          <Items>
            {listItems.map((it, i) => (
              <Item key={i} $indent={it.indent} $hot={it.hot}>
                {it.code && <Code>{it.code}</Code>}
                <span>{it.name}</span>
              </Item>
            ))}
          </Items>
          <ScrollTrack><ScrollUp aria-label="向上" /></ScrollTrack>
        </ListBox>
      </QueryLeft>
      <QueryRight>
        <QuotaSheet>
          <colgroup><col width={19} /><col width={52} /><col width={81} /><col /></colgroup>
          <thead>
            <tr><QuotaTh colSpan={2}>选中</QuotaTh><QuotaTh>定额号</QuotaTh><QuotaTh /></tr>
          </thead>
          <tbody>
            <tr>
              <QuotaTd colSpan={4} $level={1}>
                <TreeCell><TreeGuide w={16} h={18} box={0} verticals={[[6, 14, 18]]} />管道安装</TreeCell>
              </QuotaTd>
            </tr>
            <tr>
              <QuotaTd colSpan={4} $level={2}>
                <TreeCell><TreeGuide w={26} h={17} box={10} verticals={[[6, 0, 9], [16, 14, 17]]} arm={[6, 10]} />管道安装</TreeCell>
              </QuotaTd>
            </tr>
            {Array.from({ length: 11 }, (_, i) => (
              <tr key={i}>
                <QuotaTd />
                <QuotaTd $level={0}><TickCell><Tick aria-label={`C8-1-${i + 1}`} /></TickCell></QuotaTd>
                <QuotaTd><Code>C8-1-{i + 1}</Code></QuotaTd>
                <QuotaTd>{pipe}</QuotaTd>
              </tr>
            ))}
          </tbody>
        </QuotaSheet>
      </QueryRight>
    </QueryBody>
  </QueryFrame>
);

const feeRows = [
  { bg: "#dcfdfe", guide: { w: 26, h: 18, box: 2, verticals: [[8, 14, 18]] } as GuideProps, code: "", name: "整个项目", unit: "", price: "", factor: "" },
  { bg: "#effeff", guide: { w: 27, h: 18, box: 12, verticals: [[8, 0, 9], [18, 14, 18]], arm: [8, 12] } as GuideProps, code: "031001001001", name: "镀锌钢管", unit: "m", price: "1.38", factor: "" },
  { bg: "#fff", guide: { w: 37, h: 18, verticals: [[18, 0, 9]], arm: [18, 36] } as GuideProps, code: "C8-1-4", name: "室外镀锌钢管(螺纹连接) 公称直径(32mm以内)", unit: "10m", price: "13.76", factor: "0.4" },
];

const feeColumns: [string, number][] = [["", 22], ["编码", 141], ["名称", 251], ["单位", 61], ["单价", 111], ["是否拆除子目", 96], ["拆除系数", 91]];

const FeeDialog = () => (
  <DialogFrame role="dialog" aria-label="记取拆除费用">
    <TitleBar>
      <AppMark />记取拆除费用
      <CloseButton aria-label="关闭">
        <svg width="12" height="10" viewBox="0 0 12 10" aria-hidden="true">
          <path d="M1.500 1l9 8M10.500 1l-9 8" stroke="#fff" strokeWidth="2.500" />
        </svg>
      </CloseButton>
    </TitleBar>
    <DialogBody>
      <Note>
        依据：广州市定额站文件（关于2010年第一季度建设工程结算及有关问题的通知 穗建造价[2010]  31 号）{"\n"}
        计算式：拆除费用  =  (相应定额基价  -  其中材料费)  X 拆除系数。
      </Note>
      <WhitePanel>
        <DialogSheet>
          <colgroup>{feeColumns.map(([n, w]) => <col key={n} width={w} />)}</colgroup>
          <thead><tr>{feeColumns.map(([n]) => <Th key={n}>{n}</Th>)}</tr></thead>
          <tbody>
            {feeRows.map((r, i) => (
              <Tr key={i} $bg={r.bg}>
                <Td $gutter $align="center"><Code>{i + 1}</Code></Td>
                <Td $flush><TreeCell><TreeGuide {...r.guide} /><Code>{r.code}</Code></TreeCell></Td>
                <Td>{r.name}</Td>
                <Td $align="center"><Code>{r.unit}</Code></Td>
                <Td><Code>{r.price}</Code></Td>
                <Td $flush><Tick defaultChecked aria-label="是否拆除子目" /></Td>
                <Td $align="right"><Code>{r.factor}</Code></Td>
              </Tr>
            ))}
          </tbody>
        </DialogSheet>
      </WhitePanel>
      <DialogFooter>
        <Radios>
          <RadioLabel><Radio name="scope" defaultChecked />全部</RadioLabel>
          <RadioLabel><Radio name="scope" />已选</RadioLabel>
          <RadioLabel><Radio name="scope" />未选</RadioLabel>
        </Radios>
        <DialogButton $primary>全选</DialogButton>
        <DialogButton>全不选</DialogButton>
        <DialogButton>确定</DialogButton>
        <DialogButton>取消</DialogButton>
      </DialogFooter>
    </DialogBody>
    <Annotation x={617} y={87} w={61} h={76} />
    <Annotation x={747} y={133} w={45} h={39} />
  </DialogFrame>
);

const viewTabs: [string, number][] = [
  ["造价分析", 80], ["工程概况", 80], ["分部分项", 80], ["措施项目", 80], ["其他项目", 80], ["人材机汇总", 92], ["费用汇总", 80],
];

export default function App() {
  return (
    <Page>
      <Global />
      <Header>
        <Brand>
          <BrandLatin>GLodon</BrandLatin>
          <BrandHan>广联达</BrandHan>
          <BrandCaret $light />
        </Brand>
        <MenuTab $active>编制</MenuTab>
        <MenuTab>调价</MenuTab>
        <MenuTab>报表</MenuTab>
      </Header>

      <Ribbon>
        <Group $w={50}>
          <Tool icon="import" label="导入" w={44} menu />
        </Group>
        <Group $w={125} $pad={3}>
          <Tool icon="check" label="项目自检" />
          <Tool icon="feeview" label="费用查看" />
        </Group>
        <Group $w={160} $pad={4}>
          <Tool icon="query" label="查询" w={42} menu />
          <Tool icon="archive" label="存挡" w={42} menu />
          <Stack $w={68} $row={22} $pad={4}>
            <MiniTool icon="add" label="补充" row={22} menu />
            <MiniTool icon="insert" label="插入" row={22} menu />
            <MiniTool icon="remove" label="删除" row={22} muted />
          </Stack>
        </Group>
        <Group $w={207} $pad={4}>
          <Tool icon="tidy" label="整理清单" menu />
          <Tool icon="reuse" label="复用数据" />
          <Stack $w={84} $row={28} $pad={4}>
            <MiniTool icon="lock" label="锁定清单" row={28} />
            <MiniTool icon="replace" label="替换数据" row={28} />
          </Stack>
        </Group>
        <Group $w={67} $pad={3}>
          <Tool icon="install" label="安装费用" menu />
        </Group>
        <Group $w={183} $pad={4}>
          <Tool icon="region" label="地区类别" />
          <Tool icon="price" label="单价构成" />
          <Tool icon="wrench" label="拆除费用" menu>
            <Annotation x={-7} y={32} w={79} h={35} />
          </Tool>
        </Group>
        <Group $w={153} $pad={8} $short>
          <Stack $w={67} $row={28}>
            <MiniTool icon="color" label="颜色" row={28} menu />
            <MiniTool icon="filter" label="过滤" row={28} menu />
          </Stack>
          <Stack $w={76} $row={28}>
            <MiniTool icon="find" label="查找" row={28} />
            <MiniTool icon="expand" label="展开到" row={28} menu />
          </Stack>
        </Group>
        <Group $w={50} $pad={6} $short>
          <Stack $w={22} $row={28}>
            <MiniTool icon="up" row={28} />
            <MiniTool icon="down" row={28} />
          </Stack>
          <Stack $w={20} $row={28}>
            <MiniTool icon="left" row={28} />
            <MiniTool icon="right" row={28} />
          </Stack>
        </Group>
        <Group $w={50}>
          <Tool icon="more" label="其他" w={48} menu />
        </Group>
        <Group $w={173} $pad={8}>
          <Stack $w={83} $row={22}>
            <MiniTool icon="earth" label="土方折算" row={22} />
            <MiniTool icon="calc" label="计算器" row={22} />
            <MiniTool icon="omega" label="特殊符号" row={22} />
          </Stack>
          <Stack $w={80} $row={28}>
            <MiniTool icon="fx" label="图元公式" row={28} />
            <MiniTool icon="handbook" label="五金手册" row={28} />
          </Stack>
        </Group>
        <Group $w={113}>
          <Tool icon="cloud" label="云检查" w={52} />
          <Tool icon="smart" label="智能组价" w={52} />
        </Group>
      </Ribbon>

      <ViewTabs>
        {viewTabs.map(([name, w]) => (
          <ViewTab key={name} $w={w} $active={name === "分部分项"}>{name}</ViewTab>
        ))}
      </ViewTabs>

      <Workspace><MainTable /></Workspace>

      <BottomPanel>
        <BottomTab $active>工料机显示</BottomTab>
        <BottomTab>单</BottomTab>
      </BottomPanel>

      <QueryWindow />
      <FeeDialog />
    </Page>
  );
}
